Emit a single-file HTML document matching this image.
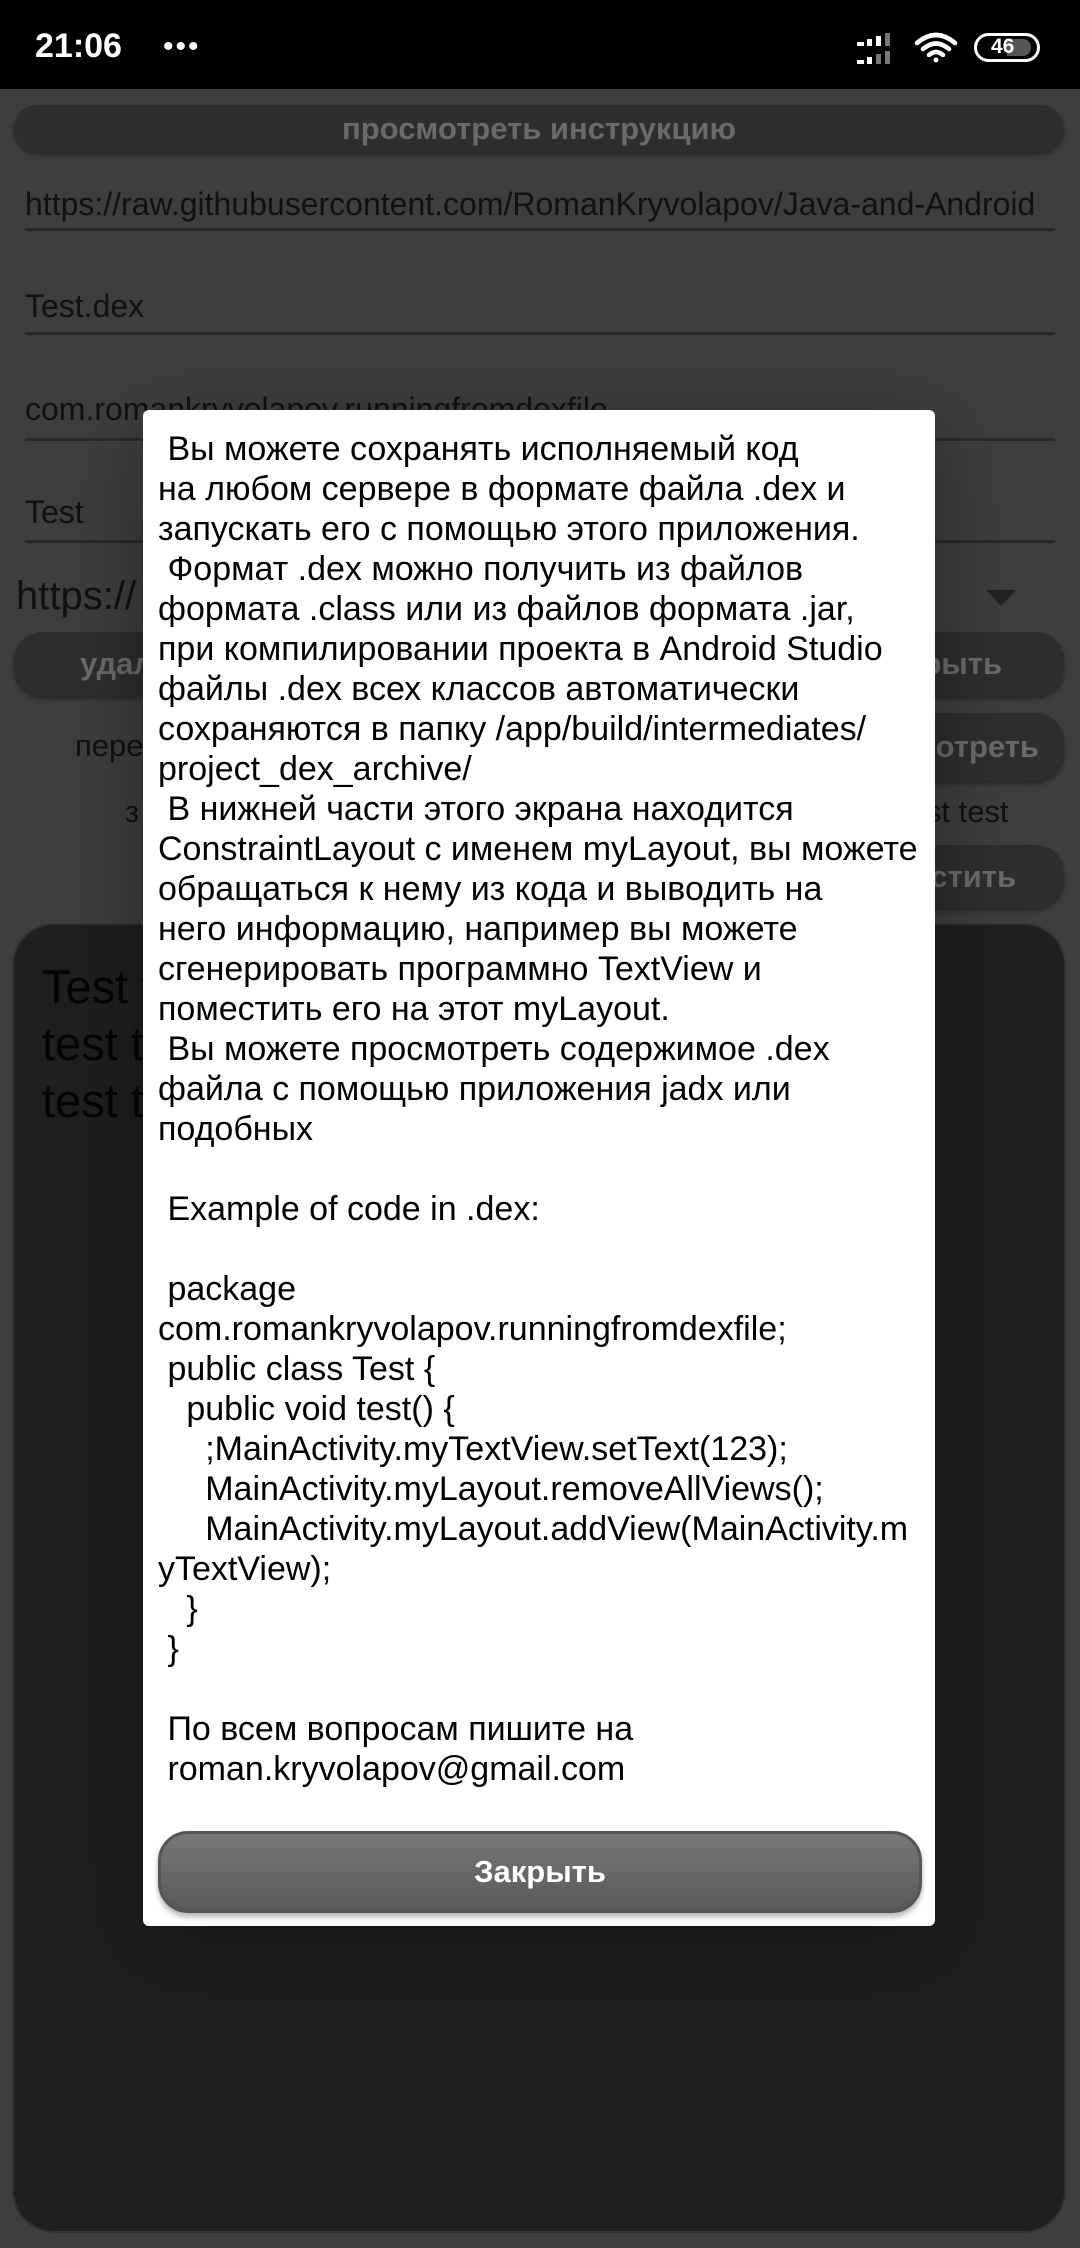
<!DOCTYPE html>
<html><head><meta charset="utf-8">
<style>
*{margin:0;padding:0;box-sizing:border-box}
body{width:1080px;height:2248px;background:#3e3e3e;position:relative;overflow:hidden;font-family:"Liberation Sans","DejaVu Sans",sans-serif;color:#1a1a1a}
.abs{position:absolute}
.sb{left:0;top:0;width:1080px;height:89px;background:#000;color:#fff}
.t{white-space:nowrap}
.line{height:3px;background:#2a2a2a;left:25px;right:25px}
.btn{background:#2e2e2e;border-radius:28px;box-shadow:0 3px 4px rgba(0,0,0,.35);color:#6a6a6a;font-weight:bold;font-size:31px;text-align:center}
.dlg{left:143px;top:410px;width:792px;height:1516px;background:#fff;border-radius:6px;box-shadow:0 20px 80px rgba(0,0,0,.35)}
.txt{position:absolute;left:15px;top:19px;font-size:34px;line-height:40px;white-space:pre;color:#000;width:775px;overflow:hidden}
.close{left:15px;top:1421px;width:764px;height:82px;border-radius:30px;background:linear-gradient(#777,#5a5a5a);border:3px solid #555;box-shadow:0 4px 6px rgba(0,0,0,.3);color:#fff;font-size:31px;font-weight:bold;text-align:center;line-height:76px}
</style></head><body>
<div class="abs sb">
 <div class="abs t" style="left:35px;top:27px;font-size:34px;font-weight:bold">21:06</div>
 <div class="abs t" style="left:163px;top:30px;font-size:30px;letter-spacing:2px">•••</div>
 <svg class="abs" style="left:857px;top:33px" width="44" height="32" viewBox="0 0 44 32">
  <g fill="#fff"><rect x="0" y="9" width="7" height="4"/><rect x="10" y="6" width="5" height="7"/><rect x="19" y="3" width="5" height="10"/></g><rect x="28" y="0" width="5" height="13" fill="#777"/>
  <g fill="#fff"><rect x="0" y="27" width="7" height="4"/><rect x="10" y="24" width="5" height="7"/></g><g fill="#777"><rect x="19" y="21" width="5" height="10"/><rect x="28" y="18" width="5" height="13"/></g>
 </svg>
 <svg class="abs" style="left:914px;top:32px" width="44" height="32" viewBox="0 0 44 32" fill="none" stroke="#fff" stroke-width="4.5" stroke-linecap="round">
  <path d="M3 11 Q22 -5 41 11"/><path d="M9 17 Q22 6 35 17"/><path d="M15 23 Q22 17 29 23"/><circle cx="22" cy="28" r="2.5" fill="#fff" stroke="none"/>
 </svg>
 <div class="abs" style="left:974px;top:33px;width:66px;height:29px;border:3px solid #fff;border-radius:15px;overflow:hidden">
  <div class="abs" style="left:30px;top:3px;width:24px;height:17px;background:#555;border-radius:0 8px 8px 0"></div>
  <div class="abs t" style="left:14px;top:-1px;font-size:21px;font-weight:bold;color:#fff">46</div>
 </div>
</div>

<div class="abs btn" style="left:14px;top:105px;width:1050px;height:47px;line-height:47px">просмотреть инструкцию</div>
<div class="abs t" style="left:25px;top:186px;font-size:32px;color:#111;width:1030px;overflow:hidden">https://raw.githubusercontent.com/RomanKryvolapov/Java-and-Android</div>
<div class="abs line" style="top:228px"></div>
<div class="abs t" style="left:25px;top:288px;font-size:32px;color:#111">Test.dex</div>
<div class="abs line" style="top:332px"></div>
<div class="abs t" style="left:25px;top:391px;font-size:32px;color:#111">com.romankryvolapov.runningfromdexfile</div>
<div class="abs line" style="top:438px"></div>
<div class="abs t" style="left:25px;top:494px;font-size:32px;color:#111">Test</div>
<div class="abs line" style="top:540px"></div>
<div class="abs t" style="left:16px;top:574px;font-size:40px;color:#111">https://</div>
<svg class="abs" style="left:986px;top:590px" width="30" height="18"><path d="M0 0H30L15 16Z" fill="#222"/></svg>
<div class="abs btn" style="left:14px;top:632px;width:1050px;height:64px;line-height:64px;text-align:left;padding-left:66px">удалить<span style="position:absolute;right:62px">открыть</span></div>
<div class="abs t" style="left:75px;top:728px;font-size:31px;color:#111">переименовать</div>
<div class="abs btn" style="left:840px;top:713px;width:224px;height:68px;line-height:68px;text-align:right;padding-right:25px">посмотреть</div>
<div class="abs t" style="left:125px;top:794px;font-size:31px;color:#111">з</div>
<div class="abs t" style="left:900px;top:794px;font-size:31px;color:#111">test test</div>
<div class="abs btn" style="left:840px;top:845px;width:224px;height:63px;line-height:63px;text-align:right;padding-right:48px">запустить</div>
<div class="abs" style="left:14px;top:925px;width:1050px;height:1306px;background:#1f1f1f;border-radius:40px;box-shadow:0 0 0 2px #333"></div>
<div class="abs" style="left:42px;top:958px;font-size:47px;line-height:57px;color:#050505;white-space:pre">Test test test test test test test test test
test test test test test test test test test
test test</div>

<div class="abs dlg">
<div class="txt"> Вы можете сохранять исполняемый код
на любом сервере в формате файла .dex и
запускать его с помощью этого приложения.
 Формат .dex можно получить из файлов
формата .class или из файлов формата .jar,
при компилировании проекта в Android Studio
файлы .dex всех классов автоматически
сохраняются в папку /app/build/intermediates/
project_dex_archive/
 В нижней части этого экрана находится
ConstraintLayout с именем myLayout, вы можете
обращаться к нему из кода и выводить на
него информацию, например вы можете
сгенерировать программно TextView и
поместить его на этот myLayout.
 Вы можете просмотреть содержимое .dex
файла с помощью приложения jadx или
подобных

 Example of code in .dex:

 package
com.romankryvolapov.runningfromdexfile;
 public class Test {
   public void test() {
     ;MainActivity.myTextView.setText(123);
     MainActivity.myLayout.removeAllViews();
     MainActivity.myLayout.addView(MainActivity.m
yTextView);
   }
 }

 По всем вопросам пишите на
 roman.kryvolapov@gmail.com</div>
<div class="abs close">Закрыть</div>
</div>
</body></html>
